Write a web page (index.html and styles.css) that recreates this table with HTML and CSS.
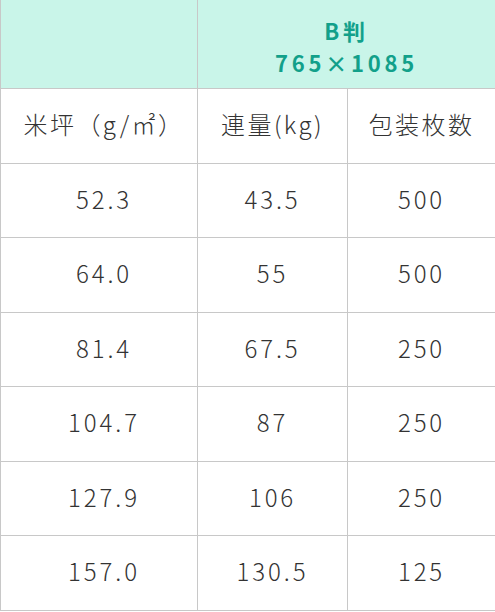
FILE: index.html
```html
<!DOCTYPE html>
<html lang="ja">
<head>
<meta charset="utf-8">
<link rel="stylesheet" href="styles.css">
</head>
<body>
<table class="spec">
  <colgroup>
    <col class="c1"><col class="c2"><col class="c3">
  </colgroup>
  <thead>
    <tr class="head">
      <th class="blank"></th>
      <th class="size" colspan="2"><div class="line">B判</div><div class="line">765×1085</div></th>
    </tr>
  </thead>
  <tbody>
    <tr class="labels">
      <td>米坪（g/㎡）</td>
      <td>連量(kg)</td>
      <td>包装枚数</td>
    </tr>
    <tr><td>52.3</td><td>43.5</td><td>500</td></tr>
    <tr><td>64.0</td><td>55</td><td>500</td></tr>
    <tr><td>81.4</td><td>67.5</td><td>250</td></tr>
    <tr><td>104.7</td><td>87</td><td>250</td></tr>
    <tr><td>127.9</td><td>106</td><td>250</td></tr>
    <tr><td>157.0</td><td>130.5</td><td>125</td></tr>
  </tbody>
</table>
</body>
</html>
```
FILE: styles.css
```css
html, body {
  margin: 0;
  padding: 0;
  background: #ffffff;
}
.spec {
  border-collapse: collapse;
  width: 495px;
  table-layout: fixed;
  font-family: "Noto Sans CJK JP", "Noto Sans", sans-serif;
  color: #333333;
}
.c1 { width: 197px; }
.c2 { width: 150px; }
.c3 { width: 148px; }
.spec th, .spec td {
  border: 1px solid #c8c8c8;
  text-align: center;
  padding: 0;
}
.head th {
  background: #c9f5e9;
  border-top: none;
  height: 85px;
  padding-top: 3px;
}
.size {
  color: #12a08a;
  font-weight: bold;
  font-size: 22px;
  letter-spacing: 0.17em;
}
.line {
  line-height: 32px;
  height: 32px;
}
.spec td {
  font-size: 24px;
  font-weight: 300;
  letter-spacing: 0.12em;
  line-height: 30px;
  height: 70.5px;
  padding-bottom: 3px;
}
.spec td:first-child {
  padding-left: 10px;
}
.labels td {
  letter-spacing: 0.1em;
}
```
